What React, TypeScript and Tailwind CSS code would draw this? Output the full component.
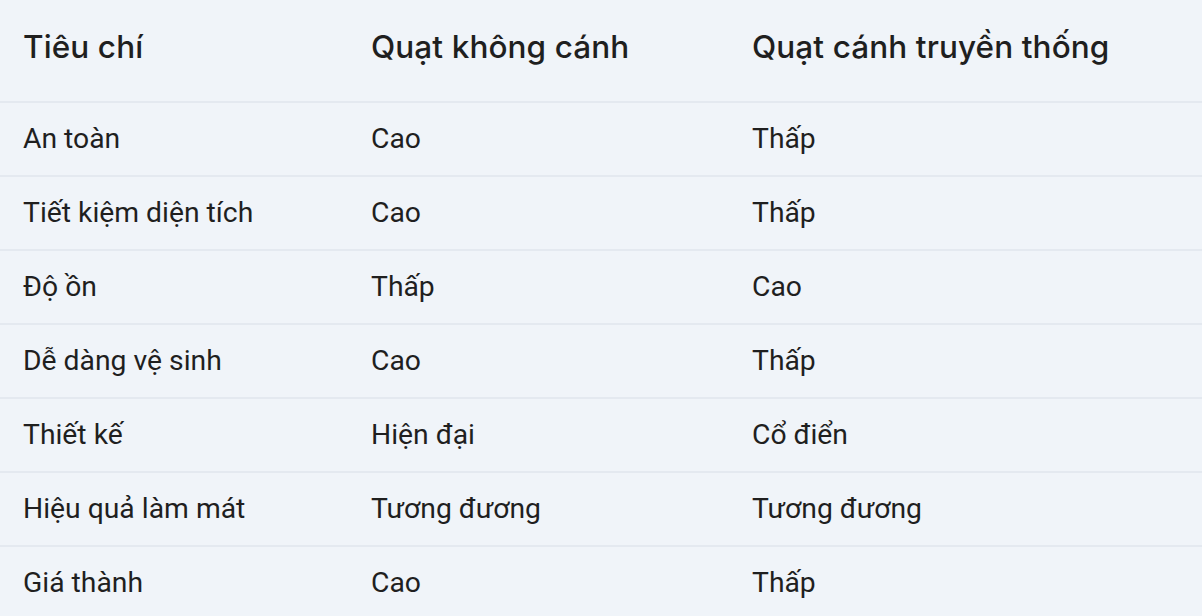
const headers = ["Tiêu chí", "Quạt không cánh", "Quạt cánh truyền thống"];

const rows = [
  ["An toàn", "Cao", "Thấp"],
  ["Tiết kiệm diện tích", "Cao", "Thấp"],
  ["Độ ồn", "Thấp", "Cao"],
  ["Dễ dàng vệ sinh", "Cao", "Thấp"],
  ["Thiết kế", "Hiện đại", "Cổ điển"],
  ["Hiệu quả làm mát", "Tương đương", "Tương đương"],
  ["Giá thành", "Cao", "Thấp"],
];

export default function App() {
  return (
    <div className="min-h-screen w-full bg-[#f0f4f9] text-[#1f1f1f] overflow-hidden">
      {/* header */}
      <div className="grid grid-cols-[348px_381px_1fr] h-[103px] border-b-2 border-[#e4e9f0] items-center font-['Inter',sans-serif] text-[31.5px] font-medium tracking-[0.1px]">
        {headers.map((h) => (
          <div key={h} className="pl-[23px] pb-[7px]">
            {h}
          </div>
        ))}
      </div>

      {/* body */}
      {rows.map((r, i) => (
        <div
          key={i}
          className="grid grid-cols-[348px_381px_1fr] h-[74px] border-b-2 border-[#e4e9f0] items-center font-['Roboto',sans-serif] text-[28.3px]"
        >
          {r.map((c, j) => (
            <div key={j} className="pl-[23px]">
              {c}
            </div>
          ))}
        </div>
      ))}
    </div>
  );
}
